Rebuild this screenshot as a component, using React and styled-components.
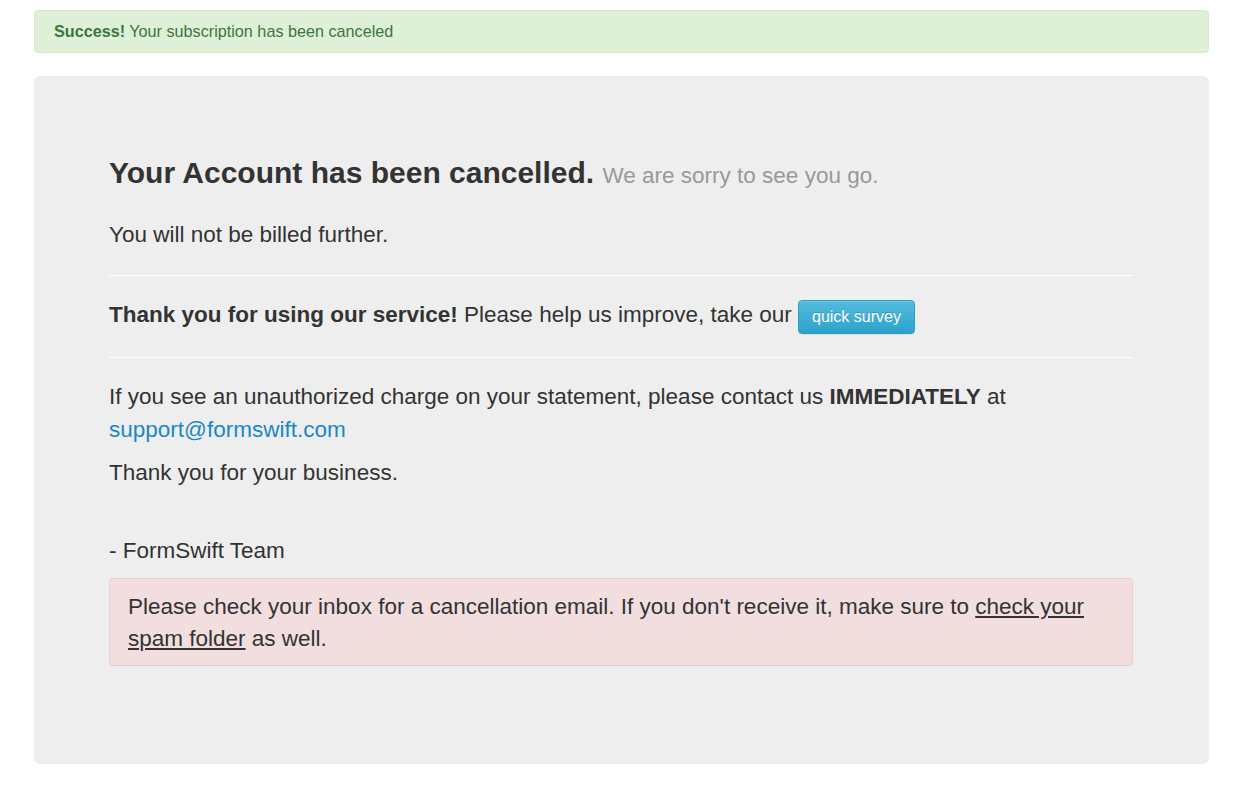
import React from "react";
import styled, { createGlobalStyle } from "styled-components";

const GlobalStyle = createGlobalStyle`
  body {
    margin: 0;
    background: #fff;
    font-family: "Liberation Sans", Arial, Helvetica, sans-serif;
    color: #333;
  }
`;

const Page = styled.div`
  padding: 10px 25px 26px 34px;
`;

const Alert = styled.div`
  border: 1px solid ${(p) => (p.$kind === "danger" ? "#ebccd1" : "#d6e9c6")};
  background: ${(p) => (p.$kind === "danger" ? "#f2dede" : "#dff0d8")};
  color: ${(p) => (p.$kind === "danger" ? "#333" : "#3c763d")};
  border-radius: 4px;
`;

const SuccessAlert = styled(Alert)`
  padding: 10px 19px;
  font-size: 16.2px;
  line-height: 21px;
  margin-bottom: 23px;
`;

const NoticeAlert = styled(Alert)`
  padding: 12px 18px 10px;
  font-size: 22.5px;
  line-height: 32px;
`;

const Jumbotron = styled.div`
  background: #eee;
  border-radius: 6px;
  padding: 80px 76px 98px 75px;
`;

const Title = styled.h2`
  margin: 0 0 26px;
  font-size: 30px;
  line-height: 33px;
  font-weight: bold;
  color: #333;
`;

const Muted = styled.small`
  font-size: 22.5px;
  font-weight: normal;
  color: #999;
`;

const Text = styled.p`
  margin: 0 0 ${(p) => p.$gap ?? 0}px;
  font-size: 22.5px;
  line-height: 33px;
`;

const Divider = styled.hr`
  border: 0;
  border-top: 1px solid #fff;
  margin: ${(p) => p.$above}px 0 ${(p) => p.$below}px;
`;

const SurveyButton = styled.a`
  display: inline-block;
  padding: 5px 13px;
  font-size: 16px;
  line-height: 22px;
  color: #fff;
  text-decoration: none;
  text-shadow: 0 -1px 0 rgba(0, 0, 0, 0.2);
  background: linear-gradient(to bottom, #55bcdc 0%, #2ba3cc 100%);
  border: 1px solid #2a9dc4;
  border-radius: 4px;
  box-shadow: inset 0 1px 0 rgba(255, 255, 255, 0.15),
    0 1px 1px rgba(0, 0, 0, 0.075);
  cursor: pointer;
`;

const Link = styled.a`
  color: ${(p) => (p.$plain ? "#333" : "#1b87c9")};
  text-decoration: ${(p) => (p.$plain ? "underline" : "none")};
`;

const App = () => {
  return (
    <Page>
      <GlobalStyle />
      <SuccessAlert>
        <strong>Success!</strong> Your subscription has been canceled
      </SuccessAlert>
      <Jumbotron>
        <Title>
          Your Account has been cancelled. <Muted>We are sorry to see you go.</Muted>
        </Title>
        <Text>You will not be billed further.</Text>
        <Divider $above={24} $below={22} />
        <Text>
          <strong>Thank you for using our service!</strong> Please help us
          improve, take our <SurveyButton>quick survey</SurveyButton>
        </Text>
        <Divider $above={23} $below={22} />
        <Text $gap={10}>
          If you see an unauthorized charge on your statement, please contact
          us <strong>IMMEDIATELY</strong> at{" "}
          <Link href="#">support@formswift.com</Link>
        </Text>
        <Text $gap={45}>Thank you for your business.</Text>
        <Text $gap={11}>- FormSwift Team</Text>
        <NoticeAlert $kind="danger">
          Please check your inbox for a cancellation email. If you don't
          receive it, make sure to <Link $plain href="#">check your spam folder</Link>{" "}
          as well.
        </NoticeAlert>
      </Jumbotron>
    </Page>
  );
};

export default App;
